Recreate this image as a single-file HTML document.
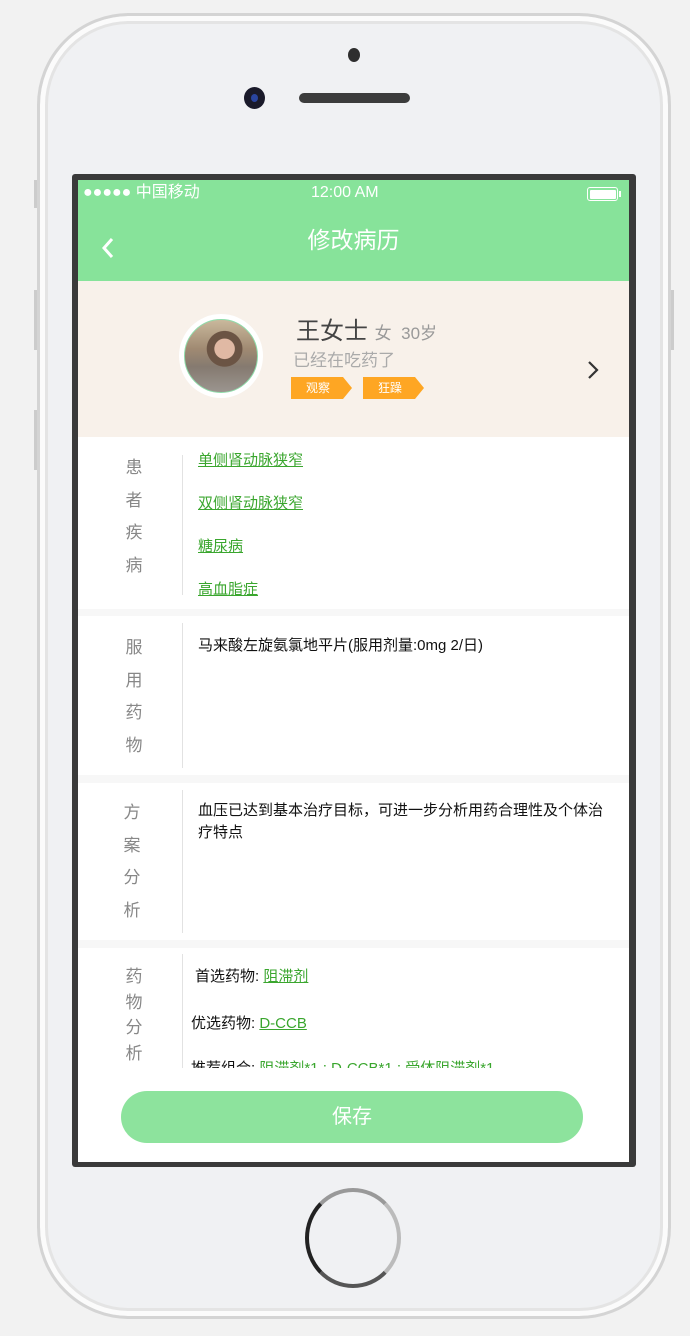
<!DOCTYPE html>
<html><head><meta charset="utf-8"><style>
*{margin:0;padding:0;box-sizing:border-box}
body{width:690px;height:1336px;background:#f2f2f2;position:relative;overflow:hidden;font-family:"Liberation Sans","Noto Sans CJK SC",sans-serif}
.a{position:absolute}
.phone{left:37px;top:13px;width:634px;height:1306px;border-radius:92px;background:#f0f1f3;border:3px solid #d4d4d4;box-shadow:inset 0 0 0 5px #fbfbfb, inset 0 0 0 8px #e4e4e4}
.screen{left:72px;top:174px;width:564px;height:993px;background:#3a3a3a;border-radius:3px}
.in{left:78px;top:180px;width:551px;height:982px;background:#fff;overflow:hidden}
.lbl{position:absolute;left:46px;width:20px;font-size:17px;color:#888;line-height:32.5px;text-align:center}
.vl{position:absolute;left:104px;width:1px;background:#e2e2e2}
.lk{position:absolute;left:120px;font-size:15px;color:#3aa62e;text-decoration:underline}
.gap{position:absolute;left:0;width:551px;background:#f7f7f7}
.txt{position:absolute;left:120px;font-size:15px;color:#111;line-height:22px}
.tag{position:absolute;top:96px;height:22px;background:#fea623;color:#fff;font-size:12px;line-height:22px;padding-left:15px;width:52px}
.tag:after{content:"";position:absolute;right:-9px;top:0;border-left:9px solid #fea623;border-top:11px solid transparent;border-bottom:11px solid transparent}
</style></head><body>
<div class="a" style="left:34px;top:180px;width:4px;height:28px;background:#ccc"></div>
<div class="a" style="left:34px;top:290px;width:4px;height:60px;background:#ccc"></div>
<div class="a" style="left:34px;top:410px;width:4px;height:60px;background:#ccc"></div>
<div class="a" style="left:670px;top:290px;width:4px;height:60px;background:#ccc"></div>
<div class="a phone"></div>
<div class="a" style="left:348px;top:48px;width:12px;height:14px;border-radius:50%;background:#2e2e2e"></div>
<div class="a" style="left:244px;top:87px;width:21px;height:22px;border-radius:50%;background:#1a1a2a"><div class="a" style="left:7px;top:7px;width:7px;height:8px;border-radius:50%;background:#2a45a0"></div></div>
<div class="a" style="left:299px;top:93px;width:111px;height:10px;border-radius:5px;background:#3c3c3c"></div>
<div class="a" style="left:305px;top:1188px;width:96px;height:100px;border-radius:50%;border:4px solid #555;border-top-color:#999;border-left-color:#222;border-right-color:#bbb"></div>
<div class="a screen"></div>
<div class="a in">
 <div class="a" style="left:0;top:0;width:551px;height:101px;background:#87e39a"></div>
 <div class="a" style="left:5px;top:2px;line-height:22px;color:#fff;font-size:16px">●●●●● 中国移动</div>
 <div class="a" style="left:233px;top:2px;line-height:22px;color:#fff;font-size:16px">12:00 AM</div>
 <div class="a" style="left:509px;top:7px;width:31px;height:14px;border:1.5px solid #fff;border-radius:3px;padding:1.5px"><div style="width:100%;height:100%;background:#fff;border-radius:1px"></div></div>
 <div class="a" style="left:541px;top:11px;width:2px;height:6px;background:#fff"></div>
 <svg class="a" style="left:22px;top:56px" width="16" height="24"><path d="M12 3 L4 12 L12 21" stroke="#fff" stroke-width="3" fill="none"/></svg>
 <div class="a" style="left:0;width:551px;top:44px;line-height:32px;text-align:center;color:#fff;font-size:23px">修改病历</div>
 <div class="a" style="left:0;top:101px;width:551px;height:156px;background:#f8f1ea">
  <div class="a" style="left:101px;top:33px;width:84px;height:84px;border-radius:50%;background:#fff"></div>
  <div class="a" style="left:106px;top:38px;width:74px;height:74px;border-radius:50%;border:1.5px solid #8fdcaa;background:radial-gradient(circle at 55% 40%,#e0b9a4 0 17%,#6b5444 18% 30%,transparent 31%),linear-gradient(180deg,#c9b89c 0%,#a08a72 40%,#857a70 65%,#9b958f 100%)"></div>
  <div class="a" style="left:218px;top:30px;font-size:24px;color:#444">王女士 <span style="font-size:17px;color:#999">女&nbsp; 30岁</span></div>
  <div class="a" style="left:215px;top:65px;font-size:17px;color:#aaa">已经在吃药了</div>
  <div class="tag" style="left:213px">观察</div>
  <div class="tag" style="left:285px">狂躁</div>
  <svg class="a" style="left:508px;top:78px" width="14" height="22"><path d="M3 3 L11 11 L3 19" stroke="#333" stroke-width="2.2" fill="none"/></svg>
 </div>
 <div class="lbl" style="top:272px">患者疾病</div>
 <div class="vl" style="top:275px;height:140px"></div>
 <div class="lk" style="top:269px">单侧肾动脉狭窄</div>
 <div class="lk" style="top:312px">双侧肾动脉狭窄</div>
 <div class="lk" style="top:355px">糖尿病</div>
 <div class="lk" style="top:398px">高血脂症</div>
 <div class="gap" style="top:429px;height:7px"></div>
 <div class="lbl" style="top:452px">服用药物</div>
 <div class="vl" style="top:443px;height:145px"></div>
 <div class="txt" style="top:455px">马来酸左旋氨氯地平片(服用剂量:0mg 2/日)</div>
 <div class="gap" style="top:595px;height:8px"></div>
 <div class="lbl" style="top:617px;left:44px">方案分析</div>
 <div class="vl" style="top:610px;height:143px"></div>
 <div class="txt" style="top:620px;width:412px">血压已达到基本治疗目标，可进一步分析用药合理性及个体治疗特点</div>
 <div class="gap" style="top:760px;height:8px"></div>
 <div class="a" style="left:0;top:768px;width:551px;height:120px;overflow:hidden">
  <div class="lbl" style="top:16px;line-height:25.5px">药物分析</div>
  <div class="vl" style="top:6px;height:114px"></div>
  <div class="txt" style="top:18px;left:117px">首选药物: <span style="color:#3aa62e;text-decoration:underline">阻滞剂</span></div>
  <div class="txt" style="top:65px;left:113px">优选药物: <span style="color:#3aa62e;text-decoration:underline">D-CCB</span></div>
  <div class="txt" style="top:110px;left:113px">推荐组合: <span style="color:#3aa62e">阻滞剂*1 ; D-CCB*1 ; 受体阻滞剂*1</span></div>
 </div>
 <div class="a" style="left:43px;top:911px;width:462px;height:52px;border-radius:26px;background:#8de39d;color:#fff;font-size:20px;text-align:center;line-height:52px">保存</div>
</div>
</body></html>
